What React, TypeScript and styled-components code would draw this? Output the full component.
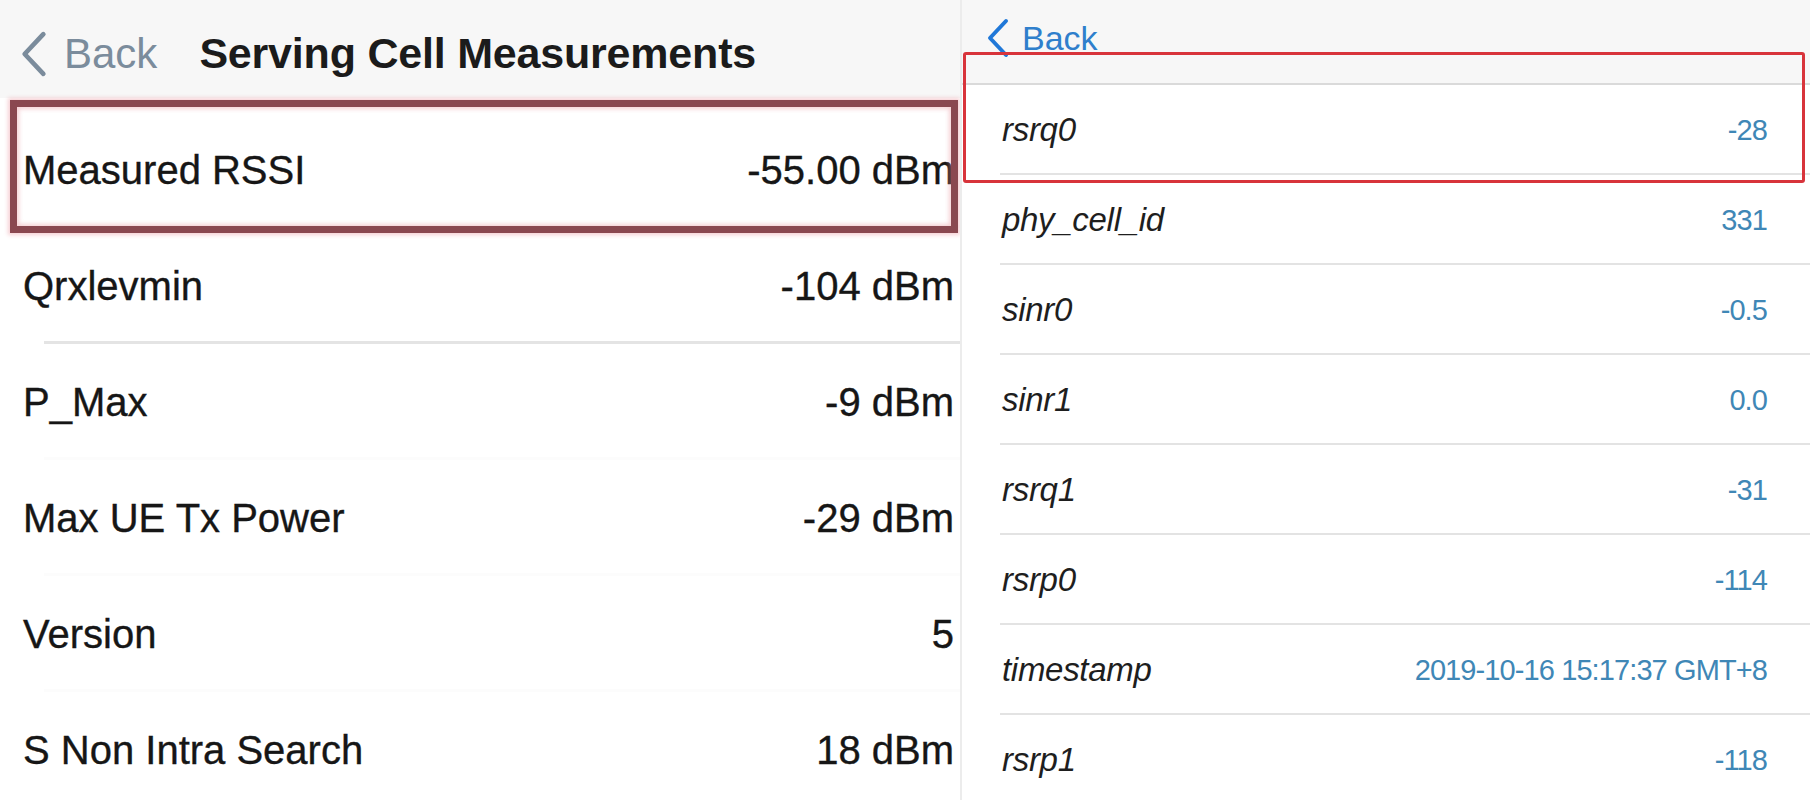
import React from "react";
import styled, { createGlobalStyle } from "styled-components";

const Global = createGlobalStyle`
  *, *::before, *::after { box-sizing: border-box; }
  html, body { margin: 0; padding: 0; background: #ffffff; }
  body { font-family: "Liberation Sans", Arial, sans-serif; }
`;

const Page = styled.div`
  display: flex;
  width: 1810px;
  height: 800px;
  overflow: hidden;
  background: #ffffff;
`;

const LeftPanel = styled.section`
  width: 962px;
  flex: none;
  display: flex;
  flex-direction: column;
  border-right: 2px solid #ececec;
  overflow: hidden;
`;

const LeftHeader = styled.header`
  height: 98px;
  flex: none;
  display: flex;
  align-items: center;
  padding: 9px 0 0 20px;
  background: #f7f7f7;
`;

const BackButton = styled.div<{ $tone: "muted" | "blue"; $size: number }>`
  display: flex;
  align-items: center;
  gap: ${(p) => (p.$tone === "muted" ? 16 : 12)}px;
  color: ${(p) => (p.$tone === "muted" ? "#7b8c9c" : "#2f7fcc")};
  font-size: ${(p) => p.$size}px;
  line-height: 1;
`;

const Title = styled.h1`
  margin: 0 0 0 42px;
  font-size: 43px;
  font-weight: 700;
  color: #1b1b1b;
  letter-spacing: -0.2px;
`;

const LeftList = styled.div`
  display: flex;
  flex-direction: column;
  padding-top: 14px;
`;

const LeftRow = styled.div<{ $highlight?: boolean; $divider?: boolean }>`
  position: relative;
  height: 116px;
  flex: none;
  display: flex;
  align-items: center;
  justify-content: space-between;
  padding: 0 6px 0 23px;
  font-size: 40px;
  color: #161616;
  -webkit-text-stroke: 0.35px #161616;
  &::before {
    content: "";
    position: absolute;
    left: 44px;
    right: 0;
    bottom: 0;
    height: 3px;
    background: ${(p) => (p.$divider ? "#e4e4e4" : "#fcfcfc")};
  }
  ${(p) =>
    p.$highlight &&
    `
    &::after {
      content: "";
      position: absolute;
      top: -12px;
      bottom: -5px;
      left: 10px;
      right: 2px;
      border: 7px solid #8a4850;
      box-shadow: 0 0 4px 2px rgba(235, 150, 160, 0.45), inset 0 0 4px 2px rgba(235, 150, 160, 0.45);
    }
  `}
`;

const RightPanel = styled.section`
  flex: 1;
  display: flex;
  flex-direction: column;
  position: relative;
`;

const RightHeader = styled.header`
  height: 85px;
  flex: none;
  display: flex;
  align-items: flex-start;
  padding: 18px 0 0 24px;
  background: #f7f7f7;
  border-bottom: 2px solid #dadada;
`;

const RightRow = styled.div<{ $highlight?: boolean }>`
  position: relative;
  height: 90px;
  flex: none;
  display: flex;
  align-items: center;
  justify-content: space-between;
  padding: 0 43px 0 40px;
  &::before {
    content: "";
    position: absolute;
    left: 38px;
    right: 0;
    bottom: 0;
    height: 2px;
    background: #e3e3e3;
  }
  ${(p) =>
    p.$highlight &&
    `
    &::after {
      content: "";
      position: absolute;
      top: -33px;
      bottom: -8px;
      left: 1px;
      right: 5px;
      border: 3px solid #d8343b;
      border-radius: 3px;
    }
  `}
`;

const Key = styled.span`
  font-style: italic;
  font-size: 33px;
  letter-spacing: -0.3px;
  color: #1e1e1e;
`;

const Val = styled.span`
  font-size: 29px;
  letter-spacing: -0.9px;
  color: #3f87b6;
`;

const Chevron = ({ color, w, h }: { color: string; w: number; h: number }) => (
  <svg width={w} height={h} viewBox="0 0 24 40" fill="none">
    <path d="M20 3 L4 20 L20 37" stroke={color} strokeWidth="4" strokeLinecap="round" strokeLinejoin="round" />
  </svg>
);

const leftRows = [
  ["Measured RSSI", "-55.00 dBm"],
  ["Qrxlevmin", "-104 dBm"],
  ["P_Max", "-9 dBm"],
  ["Max UE Tx Power", "-29 dBm"],
  ["Version", "5"],
  ["S Non Intra Search", "18 dBm"],
];

const rightRows = [
  ["rsrq0", "-28"],
  ["phy_cell_id", "331"],
  ["sinr0", "-0.5"],
  ["sinr1", "0.0"],
  ["rsrq1", "-31"],
  ["rsrp0", "-114"],
  ["timestamp", "2019-10-16 15:17:37 GMT+8"],
  ["rsrp1", "-118"],
];

export default function App() {
  return (
    <>
      <Global />
      <Page>
        <LeftPanel>
          <LeftHeader>
            <BackButton $tone="muted" $size={42}>
              <Chevron color="#7b8c9c" w={28} h={50} />
              <span>Back</span>
            </BackButton>
            <Title>Serving Cell Measurements</Title>
          </LeftHeader>
          <LeftList>
            {leftRows.map(([k, v], i) => (
              <LeftRow key={k} $highlight={i === 0} $divider={i === 1}>
                <span>{k}</span>
                <span>{v}</span>
              </LeftRow>
            ))}
          </LeftList>
        </LeftPanel>
        <RightPanel>
          <RightHeader>
            <BackButton $tone="blue" $size={34}>
              <Chevron color="#2078d8" w={24} h={40} />
              <span>Back</span>
            </BackButton>
          </RightHeader>
          {rightRows.map(([k, v], i) => (
            <RightRow key={k} $highlight={i === 0}>
              <Key>{k}</Key>
              <Val>{v}</Val>
            </RightRow>
          ))}
        </RightPanel>
      </Page>
    </>
  );
}
